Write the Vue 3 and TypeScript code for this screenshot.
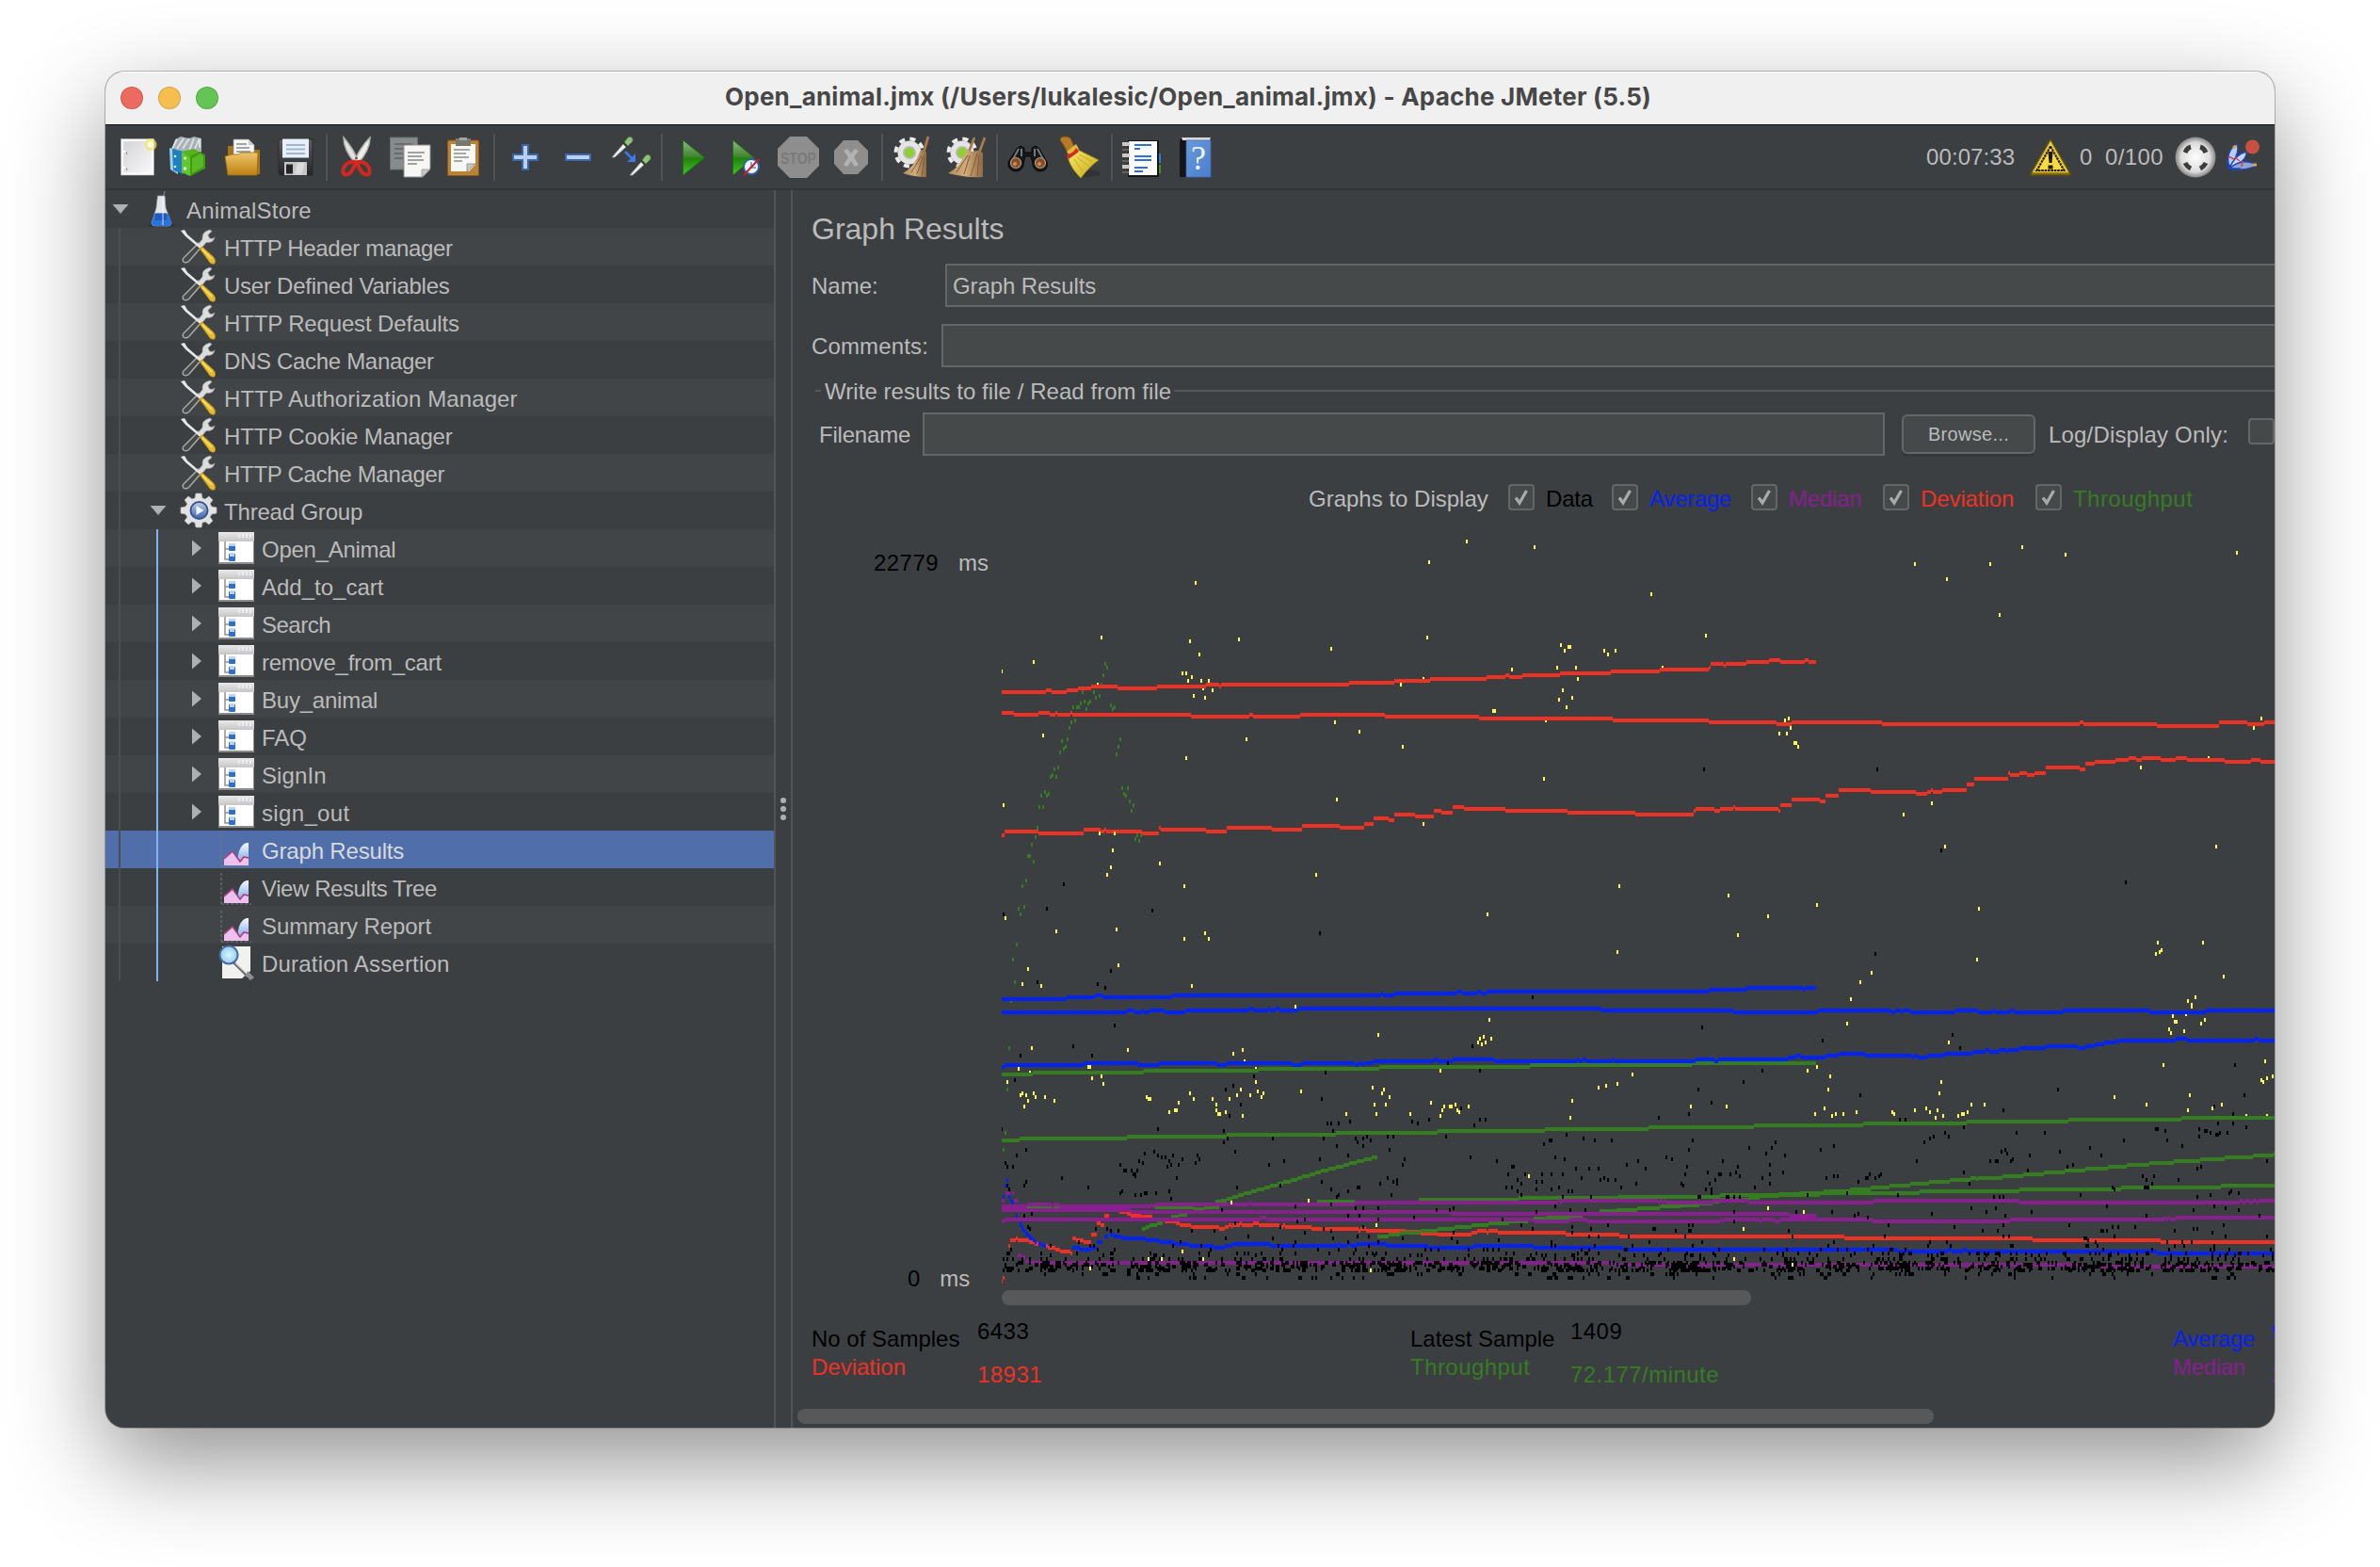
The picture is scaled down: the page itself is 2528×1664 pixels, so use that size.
<script setup lang="ts">
interface TreeRow {
  label: string
  icon: 'flask' | 'tools' | 'gear' | 'controller' | 'graph' | 'assertion'
  depth: number
  /* letter-spacing in px */
  track: number
  toggle?: 'open' | 'closed'
  selected?: boolean
}

const rows: TreeRow[] = [
  { label: 'AnimalStore', icon: 'flask', depth: 0, track: 0.2, toggle: 'open' },
  { label: 'HTTP Header manager', icon: 'tools', depth: 1, track: -0.33 },
  { label: 'User Defined Variables', icon: 'tools', depth: 1, track: -0.25 },
  { label: 'HTTP Request Defaults', icon: 'tools', depth: 1, track: -0.15 },
  { label: 'DNS Cache Manager', icon: 'tools', depth: 1, track: -0.32 },
  { label: 'HTTP Authorization Manager', icon: 'tools', depth: 1, track: 0.1 },
  { label: 'HTTP Cookie Manager', icon: 'tools', depth: 1, track: -0.12 },
  { label: 'HTTP Cache Manager', icon: 'tools', depth: 1, track: -0.3 },
  { label: 'Thread Group', icon: 'gear', depth: 1, track: -0.19, toggle: 'open' },
  { label: 'Open_Animal', icon: 'controller', depth: 2, track: -0.28, toggle: 'closed' },
  { label: 'Add_to_cart', icon: 'controller', depth: 2, track: 0, toggle: 'closed' },
  { label: 'Search', icon: 'controller', depth: 2, track: -0.5, toggle: 'closed' },
  { label: 'remove_from_cart', icon: 'controller', depth: 2, track: -0.24, toggle: 'closed' },
  { label: 'Buy_animal', icon: 'controller', depth: 2, track: -0.22, toggle: 'closed' },
  { label: 'FAQ', icon: 'controller', depth: 2, track: 0, toggle: 'closed' },
  { label: 'SignIn', icon: 'controller', depth: 2, track: 0.1, toggle: 'closed' },
  { label: 'sign_out', icon: 'controller', depth: 2, track: 0.35, toggle: 'closed' },
  { label: 'Graph Results', icon: 'graph', depth: 2, track: -0.17, selected: true },
  { label: 'View Results Tree', icon: 'graph', depth: 2, track: -0.42 },
  { label: 'Summary Report', icon: 'graph', depth: 2, track: -0.1 },
  { label: 'Duration Assertion', icon: 'assertion', depth: 2, track: 0.19 },
]

const toolbar: string[][] = [
  ['new', 'templates', 'open', 'save'],
  ['cut', 'copy', 'paste'],
  ['plus', 'minus', 'toggle'],
  ['play', 'playnow', 'stop', 'shutdown'],
  ['clear', 'clearall'],
  ['search', 'broom'],
  ['list', 'help'],
]

const checks = [
  { label: 'Data', cls: 'black', w: 110, track: -0.2 },
  { label: 'Average', cls: 'blue', w: 148, track: -0.3 },
  { label: 'Median', cls: 'purple', w: 140, track: -0.2 },
  { label: 'Deviation', cls: 'red', w: 162, track: -0.1 },
  { label: 'Throughput', cls: 'green', w: 180, track: 0.45 },
]

/* The plot is stored in four quadrants, each with its own origin and scale. */
interface Quadrant { x: number; y: number; sx: number }
const A: Quadrant = { x: 1040, y: 540, sx: 2.24 }
const B: Quadrant = { x: 1720, y: 540, sx: 2.17778 }
const C: Quadrant = { x: 1040, y: 1000, sx: 2.24 }
const D: Quadrant = { x: 1720, y: 1000, sx: 2.17778 }

function steps(q: Quadrant, data: string): string {
  return data.split('|').map((run) => {
    const t = run.trim().split(/\s+/)
    const end = Number(t.pop())
    const p = t.map((s) => s.split(',').map(Number))
    return p.map(([x, y], i) => {
      const x2 = i + 1 < p.length ? p[i + 1][0] : end
      return `M${Math.round(q.x + x / q.sx)} ${Math.round(q.y + y / 3)}H${Math.round(q.x + x2 / q.sx)}`
    }).join('')
  }).join('')
}

function mark(x: number, y: number): string {
  return `M${Math.round(x / 2) * 2 - 1} ${Math.round((y - 1) / 2) * 2 - 1}h2v4h-2z`
}

function dots(q: Quadrant, data: string): string {
  return data.trim().split(/\s+/).map((s) => {
    const [x, y] = s.split(',').map(Number)
    return mark(q.x + x / q.sx, q.y + y / 3)
  }).join('')
}

const red = [
  steps(A, '54,585 159,579 172,585 208,579 235,573 267,567 329,573 423,567 540,561 571,567 576,561 880,555 988,549 1073,543 1207,537 1252,531 1261,537 1292,531 1382,525 1503,519 1523 | 54,651 83,657 141,651 168,657 181,651 186,657 217,651 222,657 504,663 643,657 652,663 764,657 965,663 1189,669 1508,675 1523 | 54,1041 60,1029 141,1035 249,1023 289,1029 298,1023 302,1029 388,1035 428,1017 432,1023 540,1029 589,1017 697,1023 768,1011 858,1017 916,1005 939,987 974,993 988,975 1037,981 1082,963 1100,969 1127,951 1154,957 1252,963 1400,969 1523'),
  steps(B, '0,519 94,513 207,507 211,495 242,501 246,495 294,489 346,483 372,489 429,483 438,489 455 | 0,675 207,681 364,687 399,681 608,687 1065,681 1074,687 1244,693 1387,681 1453,687 1492,681 1520 | 0,969 37,975 172,963 176,957 220,963 233,957 264,951 268,957 368,963 372,945 399,927 464,933 477,915 507,897 581,903 686,909 712,903 721,897 725,903 747,897 804,879 821,861 899,843 904,849 926,843 943,849 960,843 987,825 1065,831 1078,813 1100,807 1148,801 1178,795 1196,801 1209,795 1252,801 1287,795 1313,801 1400,807 1461,801 1483,807 1520'),
  steps(C, '74,951 87,945 92,951 119,957 132,963 150,969 163,975 181,981 192,987 213,987 217,993 221 | 222,945 231,951 249,957 267 | 267,933 280 | 280,897 289,903 297 | 298,873 310 | 334,861 352,867 361,873 386,877 413 | 441,892 468,897 477,903 504,909 535,909 538,909 571,915 585,909 594,903 600,909 603,903 620,897 625,903 652,897 665,903 715,909 724,903 728,909 791,915 903,921 907,915 920,921 1015 | 1000,925 1051,929 1091,933 1172,927 1185,921 1207,927 1212,921 1234,927 1396,933 1523'),
  steps(D, '0,939 520,945 956,951 1252,957 1520'),
].join('')
const redMarks = dots(C, '54,1081 58,1071 62,1035 71,969')

const blue = [
  steps(C, '54,183 208,177 276,171 293,177 459,171 956,165 960,171 988,165 1136,159 1149,165 1185,159 1194,165 1207,159 1523 | 54,225 352,219 370,225 388,219 392,225 405,219 441,225 491,219 643,213 652,219 688,213 692,219 706,213 715,219 759,213 1481,219 1523 | 54,399 60,393 249,387 379,393 428,387 567,393 589,387 746,393 768,387 894,393 903,387 912,393 916,387 939,381 1082,375 1091,381 1127,375 1225,381 1422,375 1427,381 1436,375 1445,381 1508,375 1512,381 1523 | 222,975 240,981 267 | 267,975 280,957 293 | 298,939 307 | 311,933 320,939 338,945 397,951 428,957 464,963 499,969 558,975 585,969 603,963 692,969 853,963 858,969 876,963 884,969 898,963 970,969 1068,975 1176,969 1319,975 1523'),
  steps(D, '0,159 207,153 294,147 425,153 429,147 455 | 0,219 264,225 460,219 629,225 638,219 651,225 656,219 673,225 777,219 830,225 865,219 869,225 904,219 912,225 1026,219 1226,225 1357,219 1520 | 0,381 176,375 220,381 229,375 390,369 407,363 420,369 477,363 507,357 568,363 677,369 682,363 690,369 712,363 751,357 817,351 847,345 856,351 878,345 895,351 899,345 926,339 987,333 1061,339 1078,333 1100,327 1122,321 1148,315 1152,321 1156,315 1287,309 1313,315 1470,309 1479,315 1520 | 0,975 8,981 642,987 760,981 769,987 795,981 803,987 1244,993 1520'),
].join('')
const blueMarks = dots(C, '67,759 62,777 58,813 71,813 76,825 80,831 89,873 98,897 98,903 103,909 103,915 107,921 112,927 112,933 116,933 121,939 121,945 125,945 130,951 134,957 143,963 148,963 152,969 157,969')

const green = [
  steps(C, '54,423 128,417 392,411 665,405 952,399 1310,393 1523 | 54,633 96,627 352,621 589,615 849,609 1091,603 1346,597 1523 | 387,915 396,909 405,903 423,897 437 | 457,876 475,871 495 | 508,852 535,846 571 | 562,828 576,825 589,819 602,813 616,807 630,801 647,795 661,789 679,783 692,777 710,771 724,765 742,759 756,753 768,747 786,741 800,735 813,729 831,723 849,717 867,711 880,705 898,699 916,693 934,687 948 | 114,846 190 | 418,846 510 | 804,828 894 | 1046,822 1284,817 1521,811 1523'),
  steps(D, '0,393 168,387 455 | 0,597 68,591 311,585 564,579 804,573 1039,567 1300,561 1520 | 0,855 41,849 94,843 141,839 185,835 216,829 233,823 298,817 324,811 368,805 416,801 473,795 534,789 581,783 625,777 673,771 716,765 764,759 812,753 825,757 830,753 886,747 934,741 982,735 1030,729 1078,723 1130,717 1174,711 1226,705 1283,699 1344,693 1400,687 1466,681 1513,675 1520 | 0,813 233,807 464,801 695,795 926,789 1161,783 1392,777 1520'),
].join('')
const greenTop = steps(C, '948,939 975,933 1002,927 1051,921 1091,915 1131,909 1172,903 1212,897 1261,891 1305 | 1319,883 1351,879 1435 | 1476,858 1516,855 1523')
const greenMarks = [
  dots(A, '300,495 304,507 295,531 291,561 273,585 278,603 286,597 246,585 251,615 242,621 260,621 264,615 224,633 233,633 238,633 255,639 313,627 318,639 322,633 219,681 228,675 215,699 210,735 197,741 201,765 206,759 192,777 336,735 331,759 327,783 188,825 179,831 174,849 170,855 183,855 340,891 354,891 157,903 148,915 161,915 166,909 345,909 349,915 143,951 152,951 358,933 367,945 363,963 139,1017 134,1047 125,1071 372,1053 376,1041 385,1041 381,1059 116,1107 121,1107 130,1125 112,1185 103,1203 107,1269 94,1275 98,1293'),
  dots(C, '89,9 80,57 85,129 76,189 71,339 67,471 62,609 58,663'),
].join('')

const purple = [
  steps(C, '54,843 114,837 172,843 177,837 190,843 410,837 413,843 419,837 643,831 647,837 894,831 1378,825 1382,831 1387,825 1523 | 54,855 361,861 1122,867 1523 | 54,891 60,885 670,879 683,885 1319,891 1404,885 1445,891 1523 | 92,999 101,1005 110,1017 119,1021 128,1023 1510,1029 1523 | 62,801 74 | 78,801 83 | 54,825 60 | 83,825 92'),
  steps(D, '0,825 89,831 94,825 98,831 102,825 107,831 216,825 298,831 589,825 926,831 1435,825 1441,831 1448,825 1457,831 1465,825 1474,831 1479,825 1520 | 0,867 394,873 455 | 0,891 233,885 237,891 242,885 324,891 329,885 359,891 370,885 586,891 904,885 1261,879 1265,885 1270,879 1275,885 1287,879 1520 | 0,1029 1065,1035 1520'),
].join('')

const yellowUnder = [
  dots(A, '282,561 533,573 1057,543 1348,675'),
  dots(B, '100,507 1363,795'),
  dots(C, '631,381 658,405 121,417'),
  dots(D, '1450,555 1498,555 1311,231'),
].join('')
const yellow = [
  dots(A, '1160,105 1321,123 1070,171 515,237 291,411 502,423 618,417 838,447 1066,411 524,465 130,489 54,519 484,525 493,525 506,537 497,549 528,549 546,549 510,597 537,603 555,579 1003,561 1268,513 1384,435 1393,453 1402,441 1407,441 1487,453 1496,465 1514,453 1375,507 1420,507 1424,543 1389,579 1380,609 1411,603 1398,633 1223,645 1228,645 846,681 905,711 152,723 636,735 1008,759 493,795 1344,861 58,945 851,927 286,1035 322,1035 1057,1005 318,1089 313,1143 304,1167 430,1131 488,1203 802,1167 1523,1203 1209,1293 62,1305 183,1347 327,1341 488,1371 537,1353 546,1371'),
  dots(B, '932,123 1032,147 1428,141 684,177 858,177 758,225 74,273 880,339 200,405 383,675 392,669 396,699 370,717 387,717 405,747 409,747 414,759 1485,669 1468,699 1206,825 723,939 657,975 753,1077 1381,1077 252,1233 457,1263 344,1299 832,1275 274,1359 1246,1383 1350,1383 1242,1419 1250,1413 1254,1407'),
  dots(C, '1518,33 331,75 116,87 103,135 148,141 506,141 752,207 1214,249 950,297 1191,309 1200,303 1187,321 1196,327 1205,321 1218,309 125,339 354,345 605,357 627,345 260,399 265,399 94,405 67,447 269,435 291,429 295,453 1097,411 98,489 103,483 112,489 130,483 134,495 157,495 116,507 179,507 107,525 398,495 403,501 408,501 452,543 465,537 470,537 475,513 502,483 510,501 555,501 564,519 564,537 569,549 574,549 587,543 596,501 614,489 622,471 658,447 663,477 676,483 672,495 645,489 627,555 766,477 873,549 936,465 963,471 958,483 976,495 940,519 967,519 945,549 1026,549 1075,513 1106,525 1120,525 1125,525 1102,537 1133,519 1138,537 1142,543 1097,555 1165,525 1411,507 1406,561 1474,465 1491,459 1518,453 1307,747 600,831 784,825 945,903 484,987 403,1011 434,1011 533,1011 264,1041 932,1044'),
  dots(D, '827,57 583,99 1398,111 557,129 536,183 1332,177 1315,189 1324,201 1324,207 527,261 1280,237 1285,255 1289,255 1354,249 1346,261 1272,279 1276,291 1306,285 762,321 1494,381 1259,393 457,399 435,411 488,429 30,423 1511,429 1498,435 1485,441 1489,447 745,447 483,471 740,483 1320,489 1145,495 815,519 845,519 165,525 248,525 1219,519 1394,519 1372,531 475,531 710,531 736,537 684,537 1315,537 453,549 500,549 518,549 549,543 492,555 631,543 635,549 718,543 732,561 749,555 784,555 793,549 797,549 806,543 344,849 427,861 287,915 266,1011 401,1029'),
].join('')

/* Samples in the lowest band lie too close together to list one by one. */
function band(): string {
  let seed = 20377
  const rnd = (): number => {
    seed = (seed * 1103515245 + 12345) % 2147483648
    return seed / 2147483648
  }
  const levels: [number, number][] = [
    [1283, 0.008], [1287, 0.008], [1291, 0.008], [1297, 0.008], [1301, 0.01], [1307, 0.012], [1313, 0.016], [1319, 0.024],
    [1323, 0.035], [1327, 0.05], [1331, 0.1], [1333, 0.09], [1337, 0.18], [1341, 0.22],
    [1343, 0.22], [1345, 0.2], [1347, 0.26], [1349, 0.26], [1353, 0.09], [1357, 0.055],
  ]
  let out = ''
  for (let x = 1066; x < 2418; x += 2) {
    const k = x < 1240 ? 0.72 : 1
    const clump = 0.75 + 0.5 * (Math.sin(x / 31) * Math.sin(x / 11.3) + 0.55)
    for (const [y, p] of levels) {
      if (rnd() < p * k * clump) {
        out += mark(x, y)
        if (y > 1340 && rnd() < 0.3) out += mark(x + 2, y)
      }
    }
  }
  return out
}
const black = [
  dots(A, '201,1197 161,1275 58,1293 412,1281 811,1353'),
  dots(B, '196,831 597,831 745,1089 1171,1191 592,1419'),
  dots(C, '313,93 139,129 282,135 300,147 1317,177 322,267 1174,333 224,333 98,363 269,363 1115,387 1191,411 824,417 85,441 654,429 605,459 587,471 622,519 815,501 1147,531 596,555 882,573 829,579 838,579 855,579 842,603 1070,567 1030,573 1044,579 1178,585 1191,567 1205,567 425,597 582,603 54,597 591,627 582,639 699,627 820,627 609,669 112,663 89,681 851,651 896,627 914,627 922,621 900,639 932,633 914,651 971,621 985,621 976,663 1111,621 1398,615 1358,633 1362,633 1344,645 1438,627 1465,633 1505,633 1169,687 1371,687 1393,693 1012,693 1008,711 1232,699 394,675 416,669 425,681 434,687 443,687 461,681 452,699 381,699 390,705 457,711 448,717 475,711 484,693 519,681 524,693 515,705 336,711 62,705 67,717 80,717 345,729 349,729 363,729 376,729 367,741 372,741 372,747 726,699 690,711 811,693 878,681 197,753 470,753 112,765 107,777 260,783 614,783 717,777 340,795 336,801 372,807 385,807 394,801 399,801 421,801 452,795 457,819 815,765 838,789 900,783 905,783 878,795 855,807 851,813 954,771 972,753 985,765 994,759 994,771 981,807 1268,717 1272,717 1259,741 1299,738 1281,759 1254,783 1290,771 1281,795 1268,783 1339,741 1362,741 1326,765 1339,765 1326,789 1362,789 1380,783 1389,741 1420,723 1452,723 1474,723 1433,753 1478,759 1487,753 1496,759 1514,759 1402,795 1411,795 1389,813 1290,807 1456,813 71,789 67,777 752,843 896,849 914,849 950,849 125,867 578,855 878,873 905,873 1088,855 1120,855 1129,849 1371,843 1407,855 1442,855 775,885 838,837 950,885 1035,879 1247,885 116,909 121,915 277,915 313,921 304,915 609,897 506,921 560,921 716,909 820,915 914,909 1008,945 1131,927 1317,915 1411,909 1411,927 1496,903 1456,915 1236,951 1362,957 587,945 699,945 775,927 842,945 1124,945'),
  dots(D, '192,273 470,315 771,297 788,339 1424,393 331,411 287,447 183,471 1015,471 557,489 1446,489 213,513 1376,525 888,537 161,549 92,561 649,567 662,567 1385,579 1420,579 1420,549 1450,591 797,591 753,609 762,621 919,609 984,609 727,621 718,627 705,639 1241,597 1246,597 1263,603 1341,597 1355,603 1359,603 1368,609 1341,621 1407,609 1389,609 1381,615 1385,615 1167,633 1267,633 1302,651 170,633 161,663 361,639 353,657 300,657 340,675 383,681 466,663 496,651 1089,657 1019,669 1116,681 893,663 884,669 897,675 949,681 909,693 906,699 858,699 871,699 876,699 688,699 109,687 122,693 44,699 17,711 61,723 157,717 239,699 274,717 348,711 1050,711 1037,717 1346,717 1337,723 1498,699 945,729 797,735 152,741 205,735 235,738 257,741 270,735 279,747 348,741 379,735 222,759 331,753 348,771 231,741 210,771 200,789 214,789 144,771 148,777 39,771 5,783 313,783 479,753 496,747 505,747 553,765 571,753 575,753 579,741 592,753 601,747 605,741 810,771 1211,747 1237,747 1220,759 1294,759 1233,771 644,807 527,801 1141,783 1146,789 1216,783 1220,783 1224,783 1415,795 1411,801 1433,801 1067,807 866,813 880,813 888,813 1337,813 1368,807 183,813 187,813 248,813 253,813 266,813 279,813 435,807 213,801 492,861 815,849 1128,843 1376,843 1402,849 545,873 553,867 575,879 723,867 954,861 1328,855 1433,855 83,915 79,915 159,921 164,921 170,903 1120,921 1128,921 1328,915 1335,915 1372,927 775,909 1193,909 1141,909 1154,909 1076,945 1080,945 1085,951'),
  band(),
].join('')
</script>

<template>
  <div class="desktop">
    <div class="window">
      <header class="titlebar">
        <div class="lights"><i class="l-red"></i><i class="l-yellow"></i><i class="l-green"></i></div>
        <div class="caption">Open_animal.jmx (/Users/lukalesic/Open_animal.jmx) - Apache JMeter (5.5)</div>
      </header>

      <div class="toolbar">
        <svg width="0" height="0" class="defs">
          <defs>
            <linearGradient id="gPage" x1="0" y1="0" x2="1" y2="1"><stop offset="0" stop-color="#d4d5d8" /><stop offset="1" stop-color="#f8f8fa" /></linearGradient>
            <linearGradient id="gFolder" x1="0" y1="0" x2="0" y2="1"><stop offset="0" stop-color="#eec56b" /><stop offset="1" stop-color="#bd8111" /></linearGradient>
            <linearGradient id="gPlay" x1="0" y1="0" x2="0" y2="1"><stop offset="0" stop-color="#8fbb83" /><stop offset=".48" stop-color="#3d8429" /><stop offset=".52" stop-color="#1c8507" /><stop offset="1" stop-color="#45c62b" /></linearGradient>
            <linearGradient id="gBroom" x1="0" y1="0" x2="1" y2="1"><stop offset="0" stop-color="#fbe968" /><stop offset="1" stop-color="#c6a91b" /></linearGradient>
            <linearGradient id="gStraw" x1="0" y1="0" x2="1" y2="0"><stop offset="0" stop-color="#b68b5c" /><stop offset=".5" stop-color="#d3ac7c" /><stop offset="1" stop-color="#8e6a42" /></linearGradient>
            <linearGradient id="gDark" x1="0" y1="0" x2="0" y2="1"><stop offset="0" stop-color="#5e5f63" /><stop offset="1" stop-color="#242528" /></linearGradient>
            <linearGradient id="gHelp" x1="0" y1="0" x2="1" y2="1"><stop offset="0" stop-color="#6a99dc" /><stop offset="1" stop-color="#4a7dcb" /></linearGradient>
            <radialGradient id="gBall"><stop offset="0" stop-color="#fff" /><stop offset=".72" stop-color="#dcdcdc" /><stop offset="1" stop-color="#858585" /></radialGradient>
            <radialGradient id="gLens"><stop offset="0" stop-color="#d9f6ff" /><stop offset="1" stop-color="#93cdea" /></radialGradient>
            <linearGradient id="gBlue" x1="0" y1="0" x2="0" y2="1"><stop offset="0" stop-color="#f4f9ff" /><stop offset="1" stop-color="#6e9ae2" /></linearGradient>
            <linearGradient id="gTop" x1="0" y1="0" x2="0" y2="1"><stop offset="0" stop-color="#e9e9e9" /><stop offset="1" stop-color="#c6c6c8" /></linearGradient>
            <linearGradient id="gHub" x1="0" y1="0" x2="0" y2="1"><stop offset="0" stop-color="#c9d3e4" /><stop offset=".5" stop-color="#7d97c6" /><stop offset="1" stop-color="#3d65b0" /></linearGradient>
          </defs>
        </svg>
        <template v-for="(group, gi) in toolbar" :key="gi">
          <i v-if="gi > 0" class="sep"></i>
          <span v-for="name in group" :key="name" class="slot">
            <svg viewBox="0 0 44 44" width="44" height="44">
              <template v-if="name === 'new'">
                <rect x="4.500" y="2.500" width="35" height="38.500" fill="#fdfdfd" stroke="#a9a9a9" stroke-width=".6" />
                <rect x="7" y="5" width="30" height="33.500" fill="url(#gPage)" />
                <path d="M7 15h3v2H7zM7 32h3v2H7z" fill="#fff" /><path d="M10 16l1 3M10 33l1 3" stroke="#888" />
                <circle cx="36" cy="8.500" r="6.500" fill="#f3e36a" opacity=".75" /><circle cx="36" cy="8.500" r="3.600" fill="#fffcd4" />
              </template>
              <template v-else-if="name === 'templates'">
                <path d="M3 12L6 3l6-3 9 2 5-2 8 2v14l-14 6z" fill="#a9b3b6" />
                <path d="M3 13L8 3M8 13l7-11M14 13l7-11M21 15l5-13M27 13l5-11M32 12V3" stroke="#dde2e4" stroke-width="1.800" />
                <path d="M0 12l9 3v25l-8-5z" fill="#9bd0ef" /><path d="M3 13l12 3v24l-11-4z" fill="#1f7fc4" />
                <path d="M13 16l9 4v22l-9-4z" fill="#62c62c" /><path d="M13 16l13-3 12 7-16 2z" fill="#56b21d" />
                <path d="M22 21l10-5 6 4 0 14-16 8z" fill="#3d9b0c" /><path d="M24 23l9-5 3 3v11l-12 7z" fill="#59b826" />
                <circle cx="16.500" cy="23" r="1.600" fill="#e8ffe0" /><circle cx="16.500" cy="34" r="1.800" fill="#e8ffe0" /><circle cx="6" cy="21" r="1.300" fill="#dff" /><circle cx="6" cy="32" r="1.300" fill="#dff" />
              </template>
              <template v-else-if="name === 'open'">
                <path d="M6 10h9v4h25v26H6z" fill="#a8741a" />
                <path d="M12 3h16l6 6v18H12z" fill="#f7f7f7" stroke="#8d8d8d" stroke-width=".7" /><path d="M15 8h11M15 12h14M15 16h15" stroke="#8b8b8b" stroke-width="1.600" /><path d="M28 3v6h6z" fill="#c7c7c7" />
                <path d="M3 21l8-2h6l3-2h18l-1 24H6z" fill="url(#gFolder)" stroke="#9b6b14" stroke-width=".8" />
              </template>
              <template v-else-if="name === 'save'">
                <path d="M4 3h36v38H6l-2-2z" fill="url(#gDark)" stroke="#232427" stroke-width=".8" />
                <rect x="8" y="2.500" width="28" height="20" fill="#e7eff8" /><path d="M12 9h20M12 13.500h20M12 18h20" stroke="#a3b6cf" stroke-width="1.800" />
                <rect x="10" y="27" width="24" height="14" fill="#c6c6c6" /><rect x="12" y="29.500" width="7" height="10" fill="#242527" /><path d="M24 28h8l-4 12h-7z" fill="#e6e6e6" opacity=".7" />
              </template>
              <template v-else-if="name === 'cut'">
                <path d="M7 1c6 7 13 18 15 25l-3 2C13 21 7 11 7 1z" fill="#e3e3e0" stroke="#b4b4ae" stroke-width="1.500" /><path d="M35 1c-7 7-14 18-16 25l3 3C29 21 35 11 35 1z" fill="#eeeeea" stroke="#b4b4ae" stroke-width="1.500" />
                <circle cx="20.500" cy="23" r="1.600" fill="#666" />
                <path d="M19 27c-4-1-9 1-11.500 5.500s-1 8 2 8c5 0 9-8 10-13zM22 27c4-1 9 1 11.500 5.500s1 8-2 8c-5 0-9-8-10-13z" fill="none" stroke="#d2281f" stroke-width="4" />
              </template>
              <template v-else-if="name === 'copy'">
                <rect x="0.500" y="1" width="29" height="34" fill="#868b8b" stroke="#6c7070" /><path d="M5 8h19M5 13h9M5 18h9M5 23h9" stroke="#676b6b" stroke-width="1.800" />
                <path d="M15 9h28v25l-8 9H15z" fill="#f6f6f5" stroke="#8c8c8c" /><path d="M19 17h18M19 21h15M19 25h17M19 29h10" stroke="#a2a2a2" stroke-width="1.800" /><path d="M34 43v-8h9z" fill="#c8c8c6" stroke="#8c8c8c" stroke-width=".7" />
              </template>
              <template v-else-if="name === 'paste'">
                <rect x="5.500" y="4" width="33" height="37.500" rx="1.500" fill="#bd8335" stroke="#87571c" /><path d="M9 8h26v22l-7 7H9z" fill="#f7f7f5" />
                <path d="M14 2h16v8H14z" fill="#77796f" /><path d="M18 1h8v3h-8z" fill="#a5a79f" /><path d="M12 14h17M12 18h13M12 22h16M12 26h9" stroke="#8e8e8c" stroke-width="1.500" /><path d="M26 37v-8h9z" fill="#c8c8c6" stroke="#787878" stroke-width=".7" />
              </template>
              <template v-else-if="name === 'plus'">
                <path d="M19 9h6v10h10v6H25v10h-6V25H9v-6h10z" fill="#b9d0ef" stroke="#3a66ab" stroke-width="2" />
              </template>
              <template v-else-if="name === 'minus'">
                <rect x="9" y="19" width="26" height="6" fill="#b9d0ef" stroke="#3a66ab" stroke-width="2" />
              </template>
              <template v-else-if="name === 'toggle'">
                <g v-for="o in [0, 19]" :key="o" :transform="`translate(${o} ${o})`"><path d="M2 22L14 8l3 3L5 22z" fill="#eef1f0" stroke="#8c9290" stroke-width=".8" /><path d="M12 6l2-1 5 5-1 2z" fill="#38432f" /><path d="M15 6l4-5q3-2 5 1 1 3-2 5l-3 3z" fill="#8fc37a" stroke="#50753f" stroke-width=".8" /></g>
                <path d="M16 16l7 7" stroke="#3a7ae8" stroke-width="2.600" /><path d="M27 18v9h-9z" fill="#3a7ae8" />
              </template>
              <template v-else-if="name === 'play'">
                <path d="M11.500 4v37L34.500 22.500z" fill="url(#gPlay)" stroke="#1d6b10" stroke-width=".8" />
              </template>
              <template v-else-if="name === 'playnow'">
                <path d="M8.500 4v37L31 22.500z" fill="url(#gPlay)" stroke="#1d6b10" stroke-width=".8" /><circle cx="28" cy="32" r="8" fill="#f2f6fc" stroke="#2f62ad" stroke-width="2" /><path d="M28 27v6h5" fill="none" stroke="#6689bd" stroke-width="1.500" /><path d="M36 24L20 41" stroke="#c8202b" stroke-width="2" />
              </template>
              <template v-else-if="name === 'stop'">
                <path d="M13 0h18l13 13v18L31 44H13L0 31V13z" fill="#8e8e8e" />
                <text x="22" y="28.500" text-anchor="middle" textLength="38" lengthAdjust="spacingAndGlyphs" class="stoptext">STOP</text>
              </template>
              <template v-else-if="name === 'shutdown'">
                <path d="M14 4h15l11 11v14L29 40H14L4 29V15z" fill="#8e8e8e" /><path d="M14 15l4-2 4 5 4-5 4 2-5 7 5 8-4 2-4-6-4 6-4-2 5-8z" fill="#b2b2b2" />
              </template>
              <template v-else-if="name === 'clear' || name === 'clearall'">
                <circle cx="18" cy="17" r="14.500" fill="none" stroke="#ececec" stroke-width="4" stroke-dasharray="6 5.380" />
                <circle cx="18" cy="17" r="12.500" fill="#e4e4e4" /><circle cx="18" cy="17" r="7" fill="#b9b9b9" /><circle cx="18" cy="17" r="5.300" fill="#8ed02d" />
                <g v-if="name === 'clear'"><path d="M38 0L32 20" stroke="#a87a4b" stroke-width="2.800" /><path d="M30 14l6 2 0 27q-13 0-25-4 12-6 19-25z" fill="url(#gStraw)" /><path d="M20 38l11-18M26 40l7-20M31 42l3-20" stroke="#76573a" stroke-width=".9" /></g>
                <g v-else><path d="M31 1l-7 18M42 1l-7 19" stroke="#a87a4b" stroke-width="2.800" /><path d="M23 14l6 2 5-1 6 2 0 26q-17 1-37-4 13-6 20-25z" fill="url(#gStraw)" /><path d="M12 38l12-18M20 40l6-20M27 42l7-24M34 42l2-22" stroke="#76573a" stroke-width=".9" /></g>
              </template>
              <template v-else-if="name === 'search'">
                <path d="M14 10l4 2v5h8v-5l4-2 4 3 8 14q2 9-7 10-8-1-8-8l-2-8h-6l-2 8q0 7-8 8-9-1-8-10L10 13z" fill="#17181a" stroke="#070707" />
                <path d="M12 13l-6 11M32 13l6 11M15 13v8M29 13v8" stroke="#75777b" stroke-width="2" /><circle cx="9" cy="28" r="5.500" fill="#8d4b21" stroke="#a8a29a" stroke-width="1.200" /><circle cx="35" cy="28" r="5.500" fill="#8d4b21" stroke="#a8a29a" stroke-width="1.200" /><circle cx="8" cy="29" r="2" fill="#d48c55" /><circle cx="34" cy="29" r="2" fill="#d48c55" />
              </template>
              <template v-else-if="name === 'broom'">
                <ellipse cx="29" cy="39" rx="14" ry="4" fill="#222" opacity=".4" /><path d="M0 4q0-4 5-4 6 0 7 4l4 9-8 4-5-9z" fill="#b67a27" stroke="#7c5011" /><path d="M7 16l10-8 3 5-9 9z" fill="#e0b93a" />
                <path d="M19 14l22 11q-8 5-19 19-10-9-14-22z" fill="url(#gBroom)" stroke="#a58612" stroke-width=".8" /><path d="M17 12l3 4-11 8-2-5q7-1 10-7z" fill="#cf2a1c" /><path d="M20 19l15 8M15 24l9 13M18 22l13 10" stroke="#c9aa26" stroke-width="1" />
              </template>
              <template v-else-if="name === 'list'">
                <path d="M36 18h5v10h-5z" fill="#2c7ce0" /><path d="M36 30h5v9h-5z" fill="#3f961d" /><rect x="6" y="4" width="33" height="39" fill="#151515" /><rect x="7" y="5" width="30" height="36" fill="#fcfcfc" />
                <path d="M13 9h18M13 21h18M13 33h14" stroke="#2e6fdb" stroke-width="2" /><path d="M13 13h6M13 25h18M13 37h9" stroke="#2e6fdb" stroke-width="1.800" /><path d="M0 8h8M0 20h8M0 32h8" stroke="#c9c9c9" stroke-width="4" /><path d="M0 14h7M0 26h7M0 38h7" stroke="#6f6f6f" stroke-width="1.600" />
              </template>
              <template v-else-if="name === 'help'">
                <path d="M7 1h31v2H13v40H5V5z" fill="#141517" /><path d="M7 1h31l-1 3H8z" fill="#d9d9d9" /><path d="M12 4h26v39H12z" fill="url(#gHelp)" stroke="#3d6cb4" stroke-width=".7" />
                <text x="25" y="35" text-anchor="middle" class="qmark">?</text>
              </template>
            </svg>
          </span>
        </template>
        <div class="status">
          <span class="clock">00:07:33</span>
          <svg class="warn" viewBox="0 0 44 40" width="44" height="40"><path d="M22 1L1 37v2h42v-2z" fill="#85721c" stroke="#5d5013" stroke-width="1.500" /><path d="M22 3L3 36h38z" fill="#f5d33c" stroke="#c7a92c" stroke-width=".8" /><path d="M22 8.500L7.500 34h29z" fill="#f7d941" stroke="#26210e" stroke-width="2.200" stroke-dasharray="2.600 .8" /><path d="M19.500 14h5l-1 12h-3zM19.500 28.500h5v4h-5z" fill="#1e1a0c" /></svg>
          <span class="errs">0</span>
          <span class="threads">0/100</span>
          <svg class="ball" viewBox="0 0 44 44" width="44" height="44"><circle cx="22" cy="22" r="21.500" fill="url(#gBall)" /><path d="M11 17q2-5 6-6M27 11q4 1 6 6M11 28q2 4 6 6M33 28q-2 4-6 6" fill="none" stroke="#3c3c3c" stroke-width="5" /></svg>
          <svg class="feather" viewBox="0 0 36 34" width="36" height="34">
            <path d="M4 31Q-1 12 12 5q4 8-8 26z" fill="#b7cdf4" stroke="#1f46b8" stroke-width="1.500" /><path d="M4 31Q10 16 22 13q2 9-18 18z" fill="#c5d6f6" stroke="#1f46b8" stroke-width="1.500" /><path d="M4 31Q18 19 33 27q-9 7-29 4z" fill="#8fa6d4" stroke="#1f46b8" stroke-width="1.500" />
            <path d="M3 18l6 3M10 19l5 4M18 23l-1 6" stroke="#e0463f" stroke-width="1.600" /><path d="M8 9l3-2M29 27h4" stroke="#efa32e" stroke-width="3" /><path d="M0 22l9 12M2 31h14" stroke="#1f46b8" stroke-width="1.600" /><circle cx="28.500" cy="8" r="7.500" fill="#c75141" />
          </svg>
        </div>
      </div>

      <div class="body">
        <div class="tree">
          <div v-for="(r, i) in rows" :key="i" class="row" :class="['d' + r.depth, { alt: i % 2 === 1, sel: r.selected }]">
            <i v-if="i > 0" class="guide"></i>
            <i v-if="r.depth === 2" class="guide hot"></i>
            <span class="tog">
              <svg v-if="r.toggle === 'open'" width="18" height="10" viewBox="0 0 18 10"><path d="M.5 0h17L9 10z" fill="#adb0b2" /></svg>
              <svg v-else-if="r.toggle === 'closed'" class="closed" width="10" height="18" viewBox="0 0 10 18"><path d="M0 0.500v17L10 9z" fill="#adb0b2" /></svg>
            </span>
            <svg class="ico" width="38" height="38" viewBox="0 0 38 38">
              <template v-if="r.icon === 'flask'">
                <ellipse cx="20" cy="36" rx="14" ry="2" fill="#25282a" opacity=".6" /><path d="M23 0l-2 9" stroke="#777" stroke-width="1.500" /><path d="M15.500 5h7.500l1 13 6 16q0 3-4 3H13q-4 0-4-3l5-16z" fill="#dfe3ea" stroke="#a4a9b5" stroke-width=".7" /><path d="M12 24h14.500l4 10q0 3-4 3H13q-4 0-4-3z" fill="#2a72dc" /><path d="M13 23h12v8H13z" fill="#1b4fa8" opacity=".6" /><path d="M21 6v30" stroke="#fff" stroke-width="1.500" opacity=".5" />
              </template>
              <template v-else-if="r.icon === 'tools'">
                <path d="M3 35q-2-3 1-5l15-15 4 3L9 34q-3 3-6 1z" fill="#474948" stroke="#a9aaa8" stroke-width="1.500" />
                <path d="M18 17l5-6q-1-8 8-10l2 1.500-4 4 1.500 3.500 3 .5 2.500-1.500q-1 6-9 5.500l-5 6z" fill="#dcdcdb" stroke="#9d9e9c" stroke-width=".7" />
                <path d="M0 2l4-1 3 5 15 13-1.500 2L5 8z" fill="#e6e6e6" /><path d="M20 21l3-2 12 11q3 4 1 7-3 1-5-1z" fill="#e9b92c" stroke="#a57e12" stroke-width=".7" /><path d="M23 22l10 10" stroke="#fbe17a" stroke-width="1.500" />
              </template>
              <template v-else-if="r.icon === 'gear'">
                <path d="M16 1h6l1 5 3 1 4-3 4 4-3 4 2 3 5 1v6l-5 1-2 3 3 4-4 4-4-3-3 1-1 5h-6l-1-5-3-1-4 3-4-4 3-4-2-3-5-1v-6l5-1 2-3-3-4 4-4 4 3 3-1z" fill="#e2e2e2" stroke="#b8b8b8" stroke-width=".7" /><circle cx="19.500" cy="19" r="9" fill="url(#gHub)" stroke="#3a5590" stroke-width="2" /><path d="M16.500 14v10l8-5z" fill="#f0f3f8" />
              </template>
              <template v-else-if="r.icon === 'controller'">
                <rect x="0" y="2" width="38" height="34" fill="#8b8b8b" /><rect x="1" y="2" width="36" height="32" fill="#fff" /><rect x="0" y="2" width="38" height="10" fill="url(#gTop)" />
                <path d="M22 4v4M26 4v4M30 4v4M34 4v4" stroke="#f4f4f4" stroke-width="1.500" /><path d="M7 12v19h5M7 20h5" fill="none" stroke="#909090" stroke-width="1.500" /><rect x="11" y="15" width="7" height="7" rx="1" fill="#2f6fd1" /><rect x="11" y="14" width="7" height="3" fill="#bcd4f3" /><rect x="11" y="25" width="7" height="8" rx="1" fill="#2f6fd1" /><rect x="12" y="24" width="5" height="4" fill="#bcd4f3" />
              </template>
              <template v-else-if="r.icon === 'graph'">
                <path d="M3 4v34M3 37h32" stroke="#777a7c" stroke-width="1" stroke-dasharray="3 2" /><path d="M20 34q1-20 10-22h2v24H20z" fill="url(#gBlue)" /><path d="M6 36v-8l5-4 4-3 8 11 4-5 5 2v7z" fill="#eec0ee" /><path d="M6 29l9-8 8 11 4-5 5 1" fill="none" stroke="#a3427b" stroke-width="1.600" />
              </template>
              <template v-else>
                <path d="M4 2h30v26l-9 8H4z" fill="#f1f1f0" /><path d="M15 18l16 16" stroke="#6c6e70" stroke-width="2.600" /><path d="M18 20l15 14" stroke="#cfd0d0" stroke-width="1" /><circle cx="11" cy="11" r="9.500" fill="url(#gLens)" stroke="#46679f" stroke-width="2" /><path d="M31 28l7 7-4 3-5-5z" fill="#8d8f91" />
              </template>
            </svg>
            <span class="lbl" :style="{ letterSpacing: r.track + 'px' }">{{ r.label }}</span>
          </div>
        </div>

        <div class="splitter"><i></i><i></i><i></i></div>

        <main class="pane">
          <h1>Graph Results</h1>
          <div class="line name"><label>Name:</label><div class="field">Graph Results</div></div>
          <div class="line comments"><label>Comments:</label><div class="field"></div></div>
          <div class="legend"><i class="stub"></i><span>Write results to file / Read from file</span><i class="rule"></i></div>
          <div class="line file">
            <label>Filename</label>
            <div class="field"></div>
            <button>Browse...</button>
            <span class="logonly">Log/Display Only:</span>
            <span class="box raised"></span>
          </div>
          <div class="checks">
            <span class="cap">Graphs to Display</span>
            <span v-for="c in checks" :key="c.label" class="check" :style="{ width: c.w + 'px', letterSpacing: c.track + 'px' }">
              <span class="box"><svg width="24" height="24" viewBox="0 0 24 24"><path d="M6 12.500l4 5.500 7.500-13" fill="none" stroke="#a8abad" stroke-width="3.200" /></svg></span>
              <span :class="c.cls">{{ c.label }}</span>
            </span>
          </div>
          <div class="chart">
            <div class="axis">
              <div class="top"><span class="black num">22779</span><span>ms</span></div>
              <div class="bottom"><span class="black">0</span><span>ms</span></div>
            </div>
            <svg class="plot" viewBox="1064 552 1352 818" width="1352" height="818" shape-rendering="crispEdges" fill="none">
              <path :d="yellowUnder" fill="#fffb52" />
              <path :d="greenMarks" fill="#367c21" />
              <path :d="green" stroke="#367c21" stroke-width="4" />
              <path :d="red" stroke="#ef3124" stroke-width="4" />
              <path :d="redMarks" fill="#ef3124" />
              <path :d="blue" stroke="#0222fb" stroke-width="4" />
              <path :d="blueMarks" fill="#0222fb" />
              <path :d="greenTop" stroke="#367c21" stroke-width="4" />
              <path :d="purple" stroke="#8a2090" stroke-width="4" />
              <path :d="black" fill="#000" />
              <path :d="yellow" fill="#fffb52" />
            </svg>
          </div>
          <div class="scroll inner"></div>
          <div class="stats">
            <div class="stat s1"><div class="names"><span class="black">No of Samples</span><span class="red">Deviation</span></div><div class="vals"><span class="black">6433</span><span class="red">18931</span></div></div>
            <div class="stat s2"><div class="names"><span class="black">Latest Sample</span><span class="green wide">Throughput</span></div><div class="vals"><span class="black">1409</span><span class="green">72.177/minute</span></div></div>
            <div class="stat s3"><div class="names"><span class="blue tight">Average</span><span class="purple tight">Median</span></div><div class="vals"><span class="blue">9</span><span class="purple">2</span></div></div>
          </div>
          <div class="scroll outer"></div>
        </main>
      </div>
    </div>
  </div>
</template>

<style>
html, body { margin: 0; background: #fff; }
</style>

<style scoped>
* { box-sizing: border-box; }
.desktop { width: 2528px; height: 1664px; padding: 76px 112px 0; overflow: hidden; background: #fff; font: 24px/28px "Liberation Sans", Arial, sans-serif; color: #bbb; }
.window { width: 2304px; height: 1440px; border-radius: 20px; overflow: hidden; background: #3c3f41; display: flex; flex-direction: column; box-shadow: 0 0 0 1px rgba(0,0,0,.24), 0 36px 100px rgba(0,0,0,.44); }
.titlebar { height: 57px; background: #f0f0f0; border-bottom: 1px solid #0d0e0f; display: flex; align-items: center; flex: none; box-shadow: inset 0 1px #fff; }
.lights { display: flex; gap: 16px; padding-left: 16px; width: 658px; flex: none; }
.lights i { width: 24px; height: 24px; border-radius: 50%; border: 1px solid rgba(0,0,0,.14); }
.l-red { background: #ed6a5e; } .l-yellow { background: #f5bf4f; } .l-green { background: #62c554; }
.caption { font: 700 26px/30px Inter, sans-serif; color: #474747; white-space: pre; letter-spacing: .23px; margin-top: -2px; }
.toolbar { height: 69px; flex: none; border-bottom: 2px solid #323537; display: flex; align-items: center; padding-left: 6px; }
.defs { position: absolute; }
.slot { width: 56px; display: flex; justify-content: center; flex: none; }
.slot svg { overflow: visible; display: block; }
.sep { width: 2px; height: 50px; background: #515355; margin: 0 4px; flex: none; }
.stoptext { font: 700 17px "Liberation Sans", sans-serif; fill: #7a7a7a; }
.qmark { font: 36px "Liberation Serif", serif; fill: #eef4ff; }
.status { flex: 1; display: flex; align-items: center; padding-left: 748px; }
.clock { width: 110px; letter-spacing: .1px; padding-top: 1px; } .warn { margin-right: 9px; } .errs { width: 27px; padding-top: 1px; } .threads { width: 74px; letter-spacing: .4px; padding-top: 1px; }
.ball { margin-right: 10px; } .feather { margin-top: -4px; }
.body { flex: 1; display: flex; min-height: 0; }
.tree { width: 710px; flex: none; }
.row { height: 40px; display: flex; align-items: center; position: relative; }
.row.alt { background: #414547; }
.row.sel { background: #4f6eaa; color: #d8dadb; }
.guide { position: absolute; left: 14px; top: 0; width: 2px; height: 40px; background: #4c4f51; }
.guide.hot { left: 54px; background: #7fb3f2; }
.tog { width: 18px; margin-left: 7px; display: flex; flex: none; }
.tog .closed { margin: -1px 0 0 5px; }
.d1 .tog { margin-left: 47px; } .d2 .tog { margin-left: 87px; }
.ico { flex: none; margin-left: 15px; overflow: visible; }
.lbl { margin-left: 8px; padding-top: 3px; white-space: pre; }
.splitter { width: 20px; flex: none; border: solid #525456; border-width: 0 2px; display: flex; flex-direction: column; align-items: center; gap: 3px; padding-top: 645px; }
.splitter i { width: 6px; height: 6px; border-radius: 50%; background: #adb0b2; }
.pane { flex: 1; min-width: 0; overflow: hidden; display: flex; flex-direction: column; }
.pane > * { flex: none; }
h1 { font: 32px/32px "Liberation Sans", sans-serif; margin: 25px 0 21px 20px; }
.line { display: flex; align-items: center; height: 46px; white-space: pre; }
.line label { flex: none; padding-top: 1px; }
.field { height: 46px; border: 2px solid #646667; background: #45494a; flex: 1; padding: 8px 6px; letter-spacing: -.1px; }
.name { padding-left: 20px; margin-right: -4px; } .name label { width: 142px; }
.comments { margin: 18px -4px 0 0; padding-left: 20px; } .comments label { width: 138px; letter-spacing: .15px; }
.legend { height: 24px; margin-top: 13px; padding-left: 24px; display: flex; align-items: center; line-height: 26px; white-space: pre; letter-spacing: .05px; }
.legend span { padding-top: 1px; }
.legend i { height: 2px; background: #555759; } .stub { width: 6px; margin-right: 4px; } .rule { flex: 1; margin-left: 3px; }
.file { margin-top: 11px; padding-left: 28px; } .file label { width: 110px; letter-spacing: -.2px; }
.file .field { flex: none; width: 1022px; }
button { margin-left: 18px; width: 142px; height: 42px; border: 2px solid #646667; border-radius: 6px; background: #45494a; color: #bbb; font: 20px/24px "Liberation Sans", sans-serif; letter-spacing: .3px; padding: 0; box-shadow: 0 4px 0 -1px #35383a; }
.logonly { margin-left: 14px; width: 212px; flex: none; letter-spacing: .17px; padding-top: 2px; }
.box { width: 28px; height: 28px; border: 2px solid #646667; border-radius: 4px; background: #45494a; flex: none; display: block; }
.box svg { display: block; }
.raised { margin-top: -6px; }
.checks { height: 28px; margin-top: 30px; padding-left: 548px; display: flex; align-items: center; white-space: pre; }
.cap { width: 212px; padding-top: 3px; } .check { display: flex; align-items: center; }
.check > span:last-child { margin-left: 12px; padding-top: 3px; }
.black { color: #000; } .blue { color: #0420f5; } .purple { color: #872090; } .red { color: #ef3124; } .green { color: #367c21; }
.chart { margin-top: 10px; height: 818px; display: flex; }
.axis { width: 222px; flex: none; display: flex; flex-direction: column; justify-content: space-between; padding: 32px 0 0; }
.top, .bottom { display: flex; } .top { padding-left: 86px; gap: 21px; } .bottom { padding-left: 122px; gap: 21px; height: 26px; }
.num { letter-spacing: .45px; }
.plot { display: block; flex: none; }
.scroll { height: 16px; border-radius: 8px; background: #575859; }
.inner { margin-left: 222px; width: 796px; }
.stats { height: 110px; padding: 14px 0 0 20px; display: flex; white-space: pre; }
.stat { display: flex; flex: none; } .s1 { width: 636px; } .s2 { width: 810px; }
.names { display: flex; flex-direction: column; line-height: 30px; padding-top: 7px; }
.s1 .names { width: 176px; } .s2 .names { width: 170px; } .s3 .names { width: 105px; }
.vals { display: flex; flex-direction: column; gap: 18px; letter-spacing: .45px; }
.wide { letter-spacing: .45px; } .tight { letter-spacing: -.3px; }
.outer { margin-left: 5px; width: 1207px; }
</style>
